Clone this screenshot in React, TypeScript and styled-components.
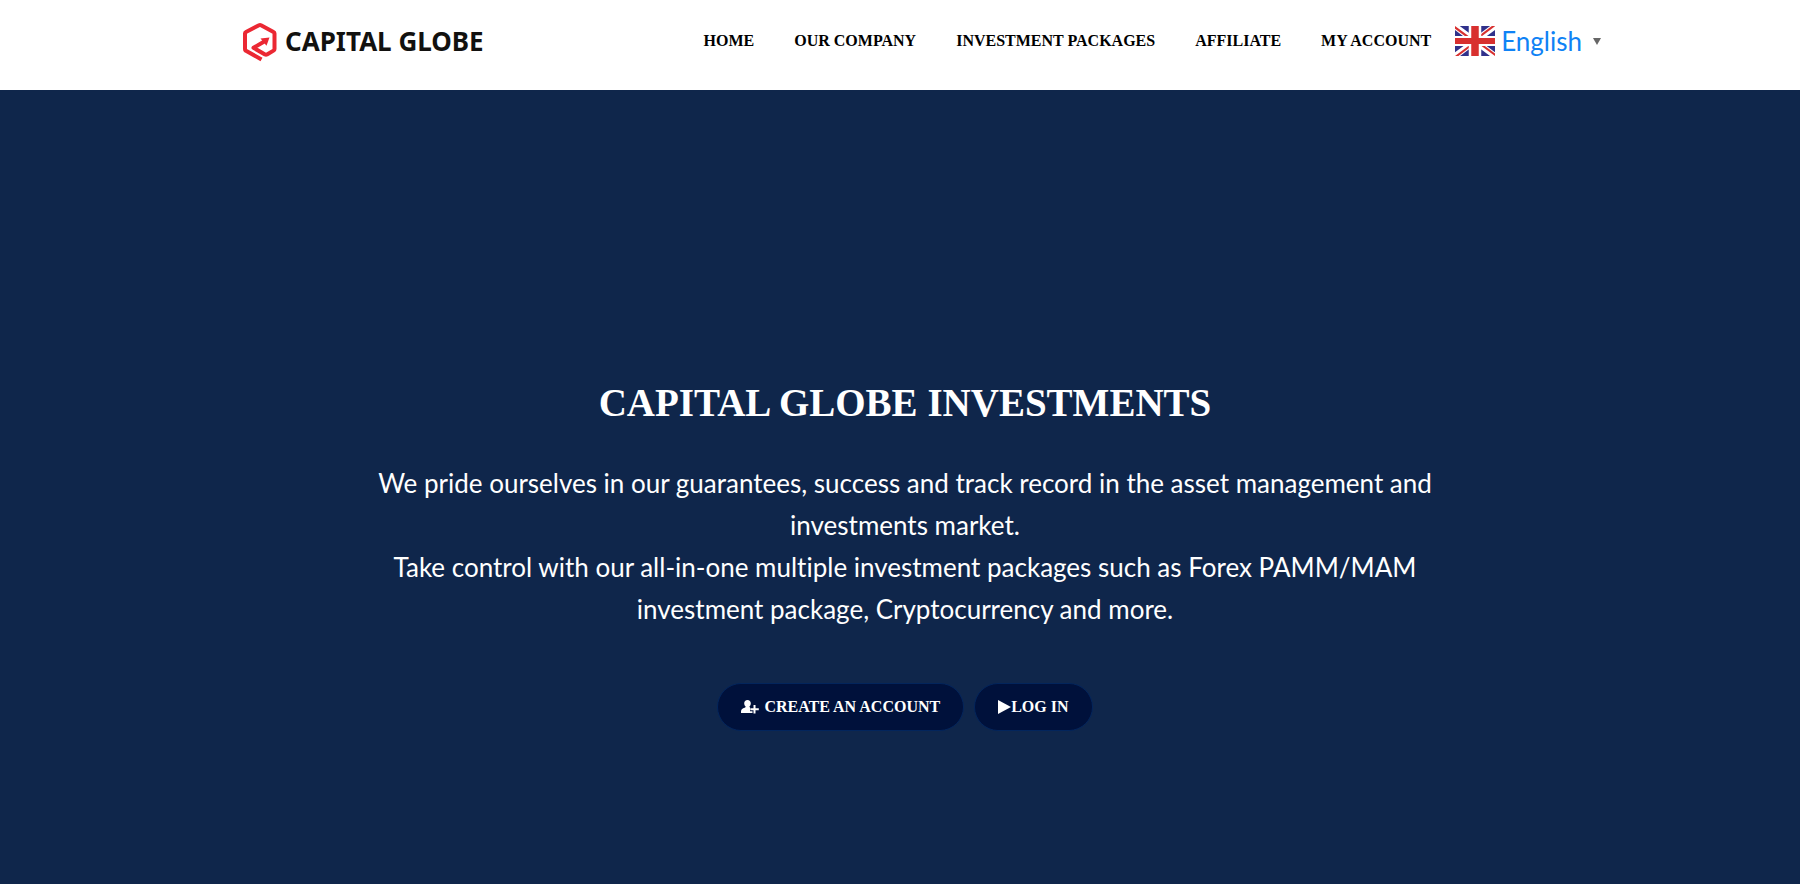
import React from "react";
import styled, { createGlobalStyle } from "styled-components";

const GlobalStyle = createGlobalStyle`
  *, *::before, *::after { box-sizing: border-box; }
  body { margin: 0; background: #0f264b; font-family: Lato, "Liberation Sans", sans-serif; }
  a { text-decoration: none; }
`;

const serif = `"Liberation Serif", "Times New Roman", serif`;

const Page = styled.div`
  min-height: 100vh;
  display: flex;
  flex-direction: column;
`;

const Header = styled.header`
  background: #fff;
  padding: 0 24px 0 66px;
`;

const HeaderInner = styled.div`
  max-width: 1360px;
  min-height: 90px;
  margin: 0 auto;
  padding-bottom: 8px;
  display: flex;
  align-items: center;
  justify-content: space-between;
`;

const Brand = styled.a`
  display: flex;
  align-items: center;
  gap: 8px;
  color: #12110f;
  font: 700 26px/32px "Noto Sans", sans-serif;
`;

const HeaderRight = styled.div`
  display: flex;
  align-items: center;
  gap: 24px;
`;

const Nav = styled.nav`
  display: flex;
  gap: 40px;
`;

const NavLink = styled.a`
  color: #000;
  font: 700 16px/24px ${serif};
`;

const Language = styled.a`
  display: flex;
  align-items: center;
  gap: 6px;
  color: #0f82f5;
  font: 400 26px/32px Lato, sans-serif;
`;

const Caret = styled.span`
  width: 8px;
  margin-left: 5px;
  border: 4px solid transparent;
  border-top: 7px solid #666;
  border-bottom: 0;
`;

const Hero = styled.main`
  flex: 1;
  display: flex;
  flex-direction: column;
  align-items: center;
  padding: 286px 24px 96px 34px;
  background: #0f264b;
  color: #fff;
  text-align: center;
`;

const Title = styled.h1`
  margin: 0 0 32px;
  font: 700 39px/54px ${serif};
`;

const Lead = styled.p`
  max-width: 1110px;
  margin: 0;
  font-size: 26px;
  line-height: 42px;
  font-variant-ligatures: none;
`;

const Actions = styled.div`
  display: flex;
  gap: 10px;
  margin-top: 53px;
`;

const Action = styled.a<{ $gap: number }>`
  display: flex;
  align-items: center;
  gap: ${(p) => p.$gap}px;
  padding: 10px 23px;
  border: 1px solid #03255c;
  border-radius: 24px;
  background: #00113b;
  color: #fff;
  font: 700 16px/26px ${serif};
`;

const links = ["HOME", "OUR COMPANY", "INVESTMENT PACKAGES", "AFFILIATE", "MY ACCOUNT"];

const LogoMark = () => (
  <svg width="36" height="42" viewBox="0 0 36 42" fill="none" aria-hidden="true">
    <path
      d="M20.500 39.500L4.500 30.500Q4 30 4 29V13.500Q4 12.500 5 12L18 5.200Q19 4.700 20 5.200L32.500 12Q33.500 12.500 33.500 13.500V29Q33.500 30 32.500 30.600L26 34.500Q25 35 24 34.500L12.500 27.800L25 20.500"
      stroke="#eb2833"
      strokeWidth="4"
      strokeLinejoin="round"
    />
    <path d="M19.500 18.500L28.500 17.500L25.500 25.800Z" fill="#eb2833" />
  </svg>
);

const Flag = () => (
  <svg width="40" height="30" viewBox="0 0 640 480" aria-hidden="true">
    <path fill="#30318b" d="M0 0h640v480H0z" />
    <path fill="#fff" d="m75 0 244 181L562 0h78v62L400 241l240 178v61h-80L320 301 81 480H0v-60l239-178L0 64V0z" />
    <path fill="#d8302f" d="m424 281 216 159v40L369 281zm-184 20 6 35L54 480H0zM640 0v3L391 191l2-44L590 0zM0 0l239 176h-60L0 42z" />
    <path fill="#fff" d="M220 0v480h200V0zM0 160v160h640V160z" />
    <path fill="#d8302f" d="M0 192v96h640v-96zM260 0v480h120V0z" />
  </svg>
);

const PersonAdd = () => (
  <svg width="18" height="14" viewBox="0 0 18 14" aria-hidden="true">
    <path
      fill="#fff"
      d="M6.500 0C8.500 0 9.800 1.400 9.800 3.300C9.800 4.700 9.200 5.900 8.400 6.500C8.500 7.400 9.300 7.700 10.200 8V10.300H12V13H0C0 10.500 .3 9.200 1.800 8.500C3.200 7.900 4.600 7.500 4.700 6.500C3.800 5.900 3.200 4.700 3.200 3.300C3.200 1.400 4.500 0 6.500 0Z"
    />
    <path stroke="#00113b" strokeWidth="4" d="M13.500 4.500V14M9 9.300H18" />
    <path stroke="#fff" strokeWidth="2" d="M13.500 5V13.500M9.300 9.300H17.800" />
  </svg>
);

const Play = () => (
  <svg width="13" height="14" viewBox="0 0 13 14" fill="#fff" aria-hidden="true">
    <path d="M0 0l13 7-13 7z" />
  </svg>
);

export default function App() {
  return (
    <Page>
      <GlobalStyle />
      <Header>
        <HeaderInner>
          <Brand href="#"><LogoMark />CAPITAL GLOBE</Brand>
          <HeaderRight>
            <Nav>{links.map((l) => <NavLink href="#" key={l}>{l}</NavLink>)}</Nav>
            <Language href="#"><Flag />English<Caret /></Language>
          </HeaderRight>
        </HeaderInner>
      </Header>
      <Hero>
        <Title>CAPITAL GLOBE INVESTMENTS</Title>
        <Lead>
          We pride ourselves in our guarantees, success and track record in the asset management and investments market.
          <br />
          Take control with our all-in-one multiple investment packages such as Forex PAMM/MAM investment package, Cryptocurrency and more.
        </Lead>
        <Actions>
          <Action href="#" $gap={5}><PersonAdd />CREATE AN ACCOUNT</Action>
          <Action href="#" $gap={0}><Play />LOG IN</Action>
        </Actions>
      </Hero>
    </Page>
  );
}
